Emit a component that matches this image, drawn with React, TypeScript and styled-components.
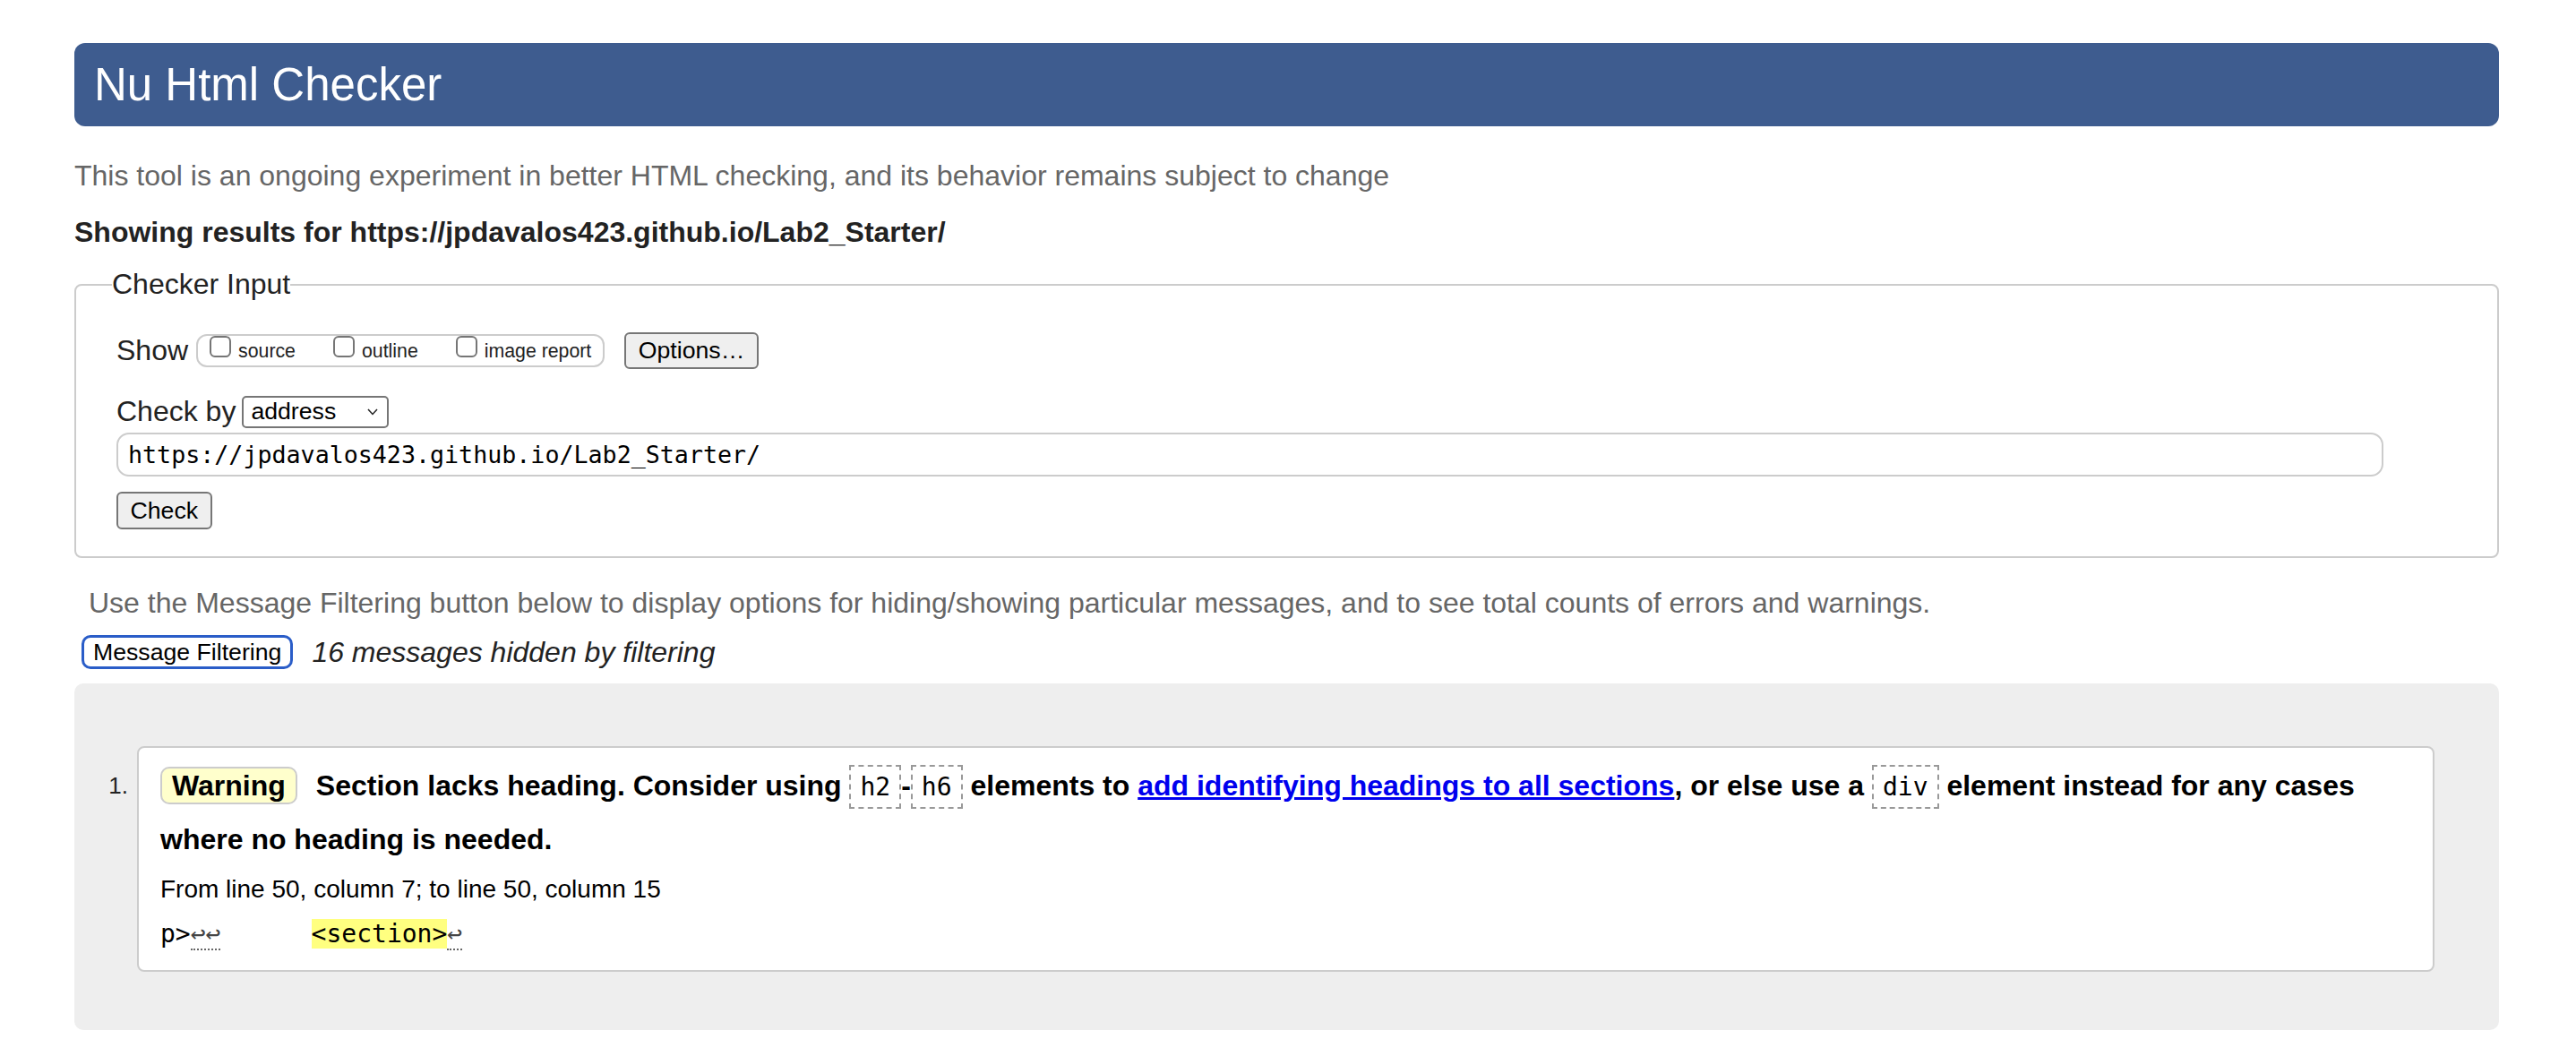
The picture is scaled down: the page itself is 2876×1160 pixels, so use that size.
import React from "react";
import styled, { createGlobalStyle } from "styled-components";

const GlobalStyle = createGlobalStyle`
  body {
    margin: 0;
    background: #fff;
    color: #222;
    font-family: "Liberation Sans", Arial, Helvetica, sans-serif;
  }
`;

const Page = styled.div`
  padding: 48px 86px 12px 83px;
`;

const Title = styled.h1`
  margin: 0;
  height: 93px;
  display: flex;
  align-items: center;
  padding-left: 22px;
  background: #3e5c8f;
  color: #fff;
  border-radius: 12px;
  font-size: 51px;
  font-weight: normal;
`;

type TextType = {
  $mt: number;
  $muted?: boolean;
  $bold?: boolean;
  $indent?: number;
};

const Text = styled.p<TextType>`
  margin: ${({ $mt }) => $mt}px 0 0;
  padding-left: ${({ $indent }) => $indent || 0}px;
  font-size: 32px;
  line-height: 37px;
  color: ${({ $muted }) => ($muted ? "#666" : "#222")};
  font-weight: ${({ $bold }) => ($bold ? "bold" : "normal")};
`;

const Fieldset = styled.fieldset`
  margin: 21px 0 0;
  padding: 0 40px 30px;
  border: 2px solid #ccc;
  border-radius: 8px;
`;

const Legend = styled.legend`
  padding: 0;
  font-size: 32px;
  line-height: 37px;
`;

const Row = styled.div<{ $mt: number }>`
  display: flex;
  align-items: center;
  margin: ${({ $mt }) => $mt}px 0 0 5px;
`;

const Label = styled.span<{ $gap: number }>`
  font-size: 32px;
  line-height: 37px;
  margin-right: ${({ $gap }) => $gap}px;
`;

const OptionGroup = styled.div`
  display: flex;
  align-items: flex-start;
  gap: 42px;
  height: 37px;
  box-sizing: border-box;
  padding: 0 13px;
  border: 2px solid #ccc;
  border-radius: 12px;
`;

const OptionItem = styled.label`
  display: flex;
  align-items: baseline;
  gap: 8px;
  font-size: 21.3px;
  line-height: 24px;
  color: #222;
`;

const CheckBox = styled.span`
  display: inline-block;
  width: 20px;
  height: 20px;
  border: 2px solid #767676;
  border-radius: 6px;
  background: #fff;
`;

const Button = styled.button<{ $h: number; $ml?: number }>`
  height: ${({ $h }) => $h}px;
  margin-left: ${({ $ml }) => $ml || 0}px;
  padding: 0 13.5px;
  font-family: inherit;
  font-size: 26.67px;
  color: #000;
  background: #efefef;
  border: 2px solid #767676;
  border-radius: 6px;
`;

const Select = styled.div`
  display: flex;
  align-items: center;
  justify-content: space-between;
  width: 164px;
  height: 36px;
  box-sizing: border-box;
  padding: 0 10px 0 8px;
  border: 2px solid #767676;
  border-radius: 5px;
  font-size: 26.67px;
  color: #000;
`;

const UrlInput = styled.input`
  display: block;
  width: 96.5%;
  height: 49px;
  box-sizing: border-box;
  margin: 5px 0 0 5px;
  padding: 0 11px;
  border: 2px solid #ccc;
  border-radius: 14px;
  font-family: "DejaVu Sans Mono", "Liberation Mono", monospace;
  font-size: 26.67px;
  color: #000;
  outline: none;
`;

const CheckWrap = styled.div`
  margin: 17px 0 0 5px;
`;

const FilterRow = styled.div`
  display: flex;
  align-items: center;
  gap: 21px;
  height: 38px;
  margin-top: 17.5px;
  padding-left: 8px;
`;

const FilterButton = styled.button`
  height: 38px;
  padding: 0 10px;
  font-family: inherit;
  font-size: 26.67px;
  color: #000;
  background: #fff;
  border: 3px solid #2a5dc8;
  border-radius: 10px;
`;

const Hidden = styled.em`
  font-size: 32px;
  line-height: 37px;
`;

const Results = styled.div`
  margin-top: 16px;
  padding: 70px 72px 65px 0;
  background: #eee;
  border-radius: 10px;
`;

const Item = styled.div`
  display: flex;
  gap: 10px;
`;

const Num = styled.div`
  width: 60px;
  margin-top: 14px;
  text-align: right;
  font-size: 26px;
  line-height: 60px;
  color: #222;
`;

const Card = styled.div`
  flex: 1;
  padding: 12px 24px 16px;
  background: #fff;
  border: 2px solid #ccc;
  border-radius: 8px;
`;

const Message = styled.p`
  margin: 0;
  font-size: 32px;
  line-height: 60px;
  font-weight: bold;
  color: #000;
`;

const Badge = styled.span`
  display: inline-block;
  margin-right: 21px;
  padding: 0 11px;
  line-height: 38px;
  background: #ffffcc;
  border: 2px solid #ccc;
  border-radius: 10px;
`;

const Code = styled.code`
  display: inline-block;
  padding: 6px 10px;
  font-family: "DejaVu Sans Mono", "Liberation Mono", monospace;
  font-size: 28px;
  font-weight: normal;
  line-height: 33px;
  border: 2px dashed #999;
`;

const Link = styled.a`
  color: #0000ee;
  text-decoration: underline;
`;

const Location = styled.p`
  margin: 4px 0 0;
  font-size: 28px;
  line-height: 44px;
  color: #000;
`;

const Extract = styled.p`
  margin: 4px 0 0;
  font-family: "DejaVu Sans Mono", "Liberation Mono", monospace;
  font-size: 28px;
  line-height: 48px;
  white-space: pre;
  color: #000;
`;

const LineBreak = styled.span`
  color: #444;
  border-bottom: 2px dotted #666;
`;

const Mark = styled.mark`
  background: #ffff80;
  color: #000;
`;

const Chevron = () => (
  <svg width="12" height="8" viewBox="0 0 12 8">
    <polyline
      points="1,1 6,6.5 11,1"
      fill="none"
      stroke="#222"
      strokeWidth="1.5"
    />
  </svg>
);

const options = ["source", "outline", "image report"];

function App() {
  return (
    <Page>
      <GlobalStyle />
      <Title>Nu Html Checker</Title>
      <Text $mt={37} $muted>
        This tool is an ongoing experiment in better HTML checking, and its
        behavior remains subject to change
      </Text>
      <Text $mt={26} $bold>
        Showing results for https://jpdavalos423.github.io/Lab2_Starter/
      </Text>

      <Fieldset>
        <Legend>Checker Input</Legend>
        <Row $mt={35}>
          <Label $gap={9}>Show</Label>
          <OptionGroup>
            {options.map((name) => (
              <OptionItem key={name}>
                <CheckBox />
                {name}
              </OptionItem>
            ))}
          </OptionGroup>
          <Button $h={41} $ml={22}>
            Options…
          </Button>
        </Row>
        <Row $mt={29}>
          <Label $gap={7}>Check by</Label>
          <Select>
            address
            <Chevron />
          </Select>
        </Row>
        <UrlInput readOnly value="https://jpdavalos423.github.io/Lab2_Starter/" />
        <CheckWrap>
          <Button $h={42}>Check</Button>
        </CheckWrap>
      </Fieldset>

      <Text $mt={31.5} $muted $indent={16}>
        Use the Message Filtering button below to display options for
        hiding/showing particular messages, and to see total counts of errors
        and warnings.
      </Text>
      <FilterRow>
        <FilterButton>Message Filtering</FilterButton>
        <Hidden>16 messages hidden by filtering</Hidden>
      </FilterRow>

      <Results>
        <Item>
          <Num>1.</Num>
          <Card>
            <Message>
              <Badge>Warning</Badge>Section lacks heading. Consider using{" "}
              <Code>h2</Code>-<Code>h6</Code> elements to{" "}
              <Link href="#">add identifying headings to all sections</Link>, or
              else use a <Code>div</Code> element instead for any cases where no
              heading is needed.
            </Message>
            <Location>From line 50, column 7; to line 50, column 15</Location>
            <Extract>
              p&gt;<LineBreak>↩↩</LineBreak>
              {"      "}
              <Mark>&lt;section&gt;</Mark>
              <LineBreak>↩</LineBreak>
            </Extract>
          </Card>
        </Item>
      </Results>
    </Page>
  );
}

export default App;
